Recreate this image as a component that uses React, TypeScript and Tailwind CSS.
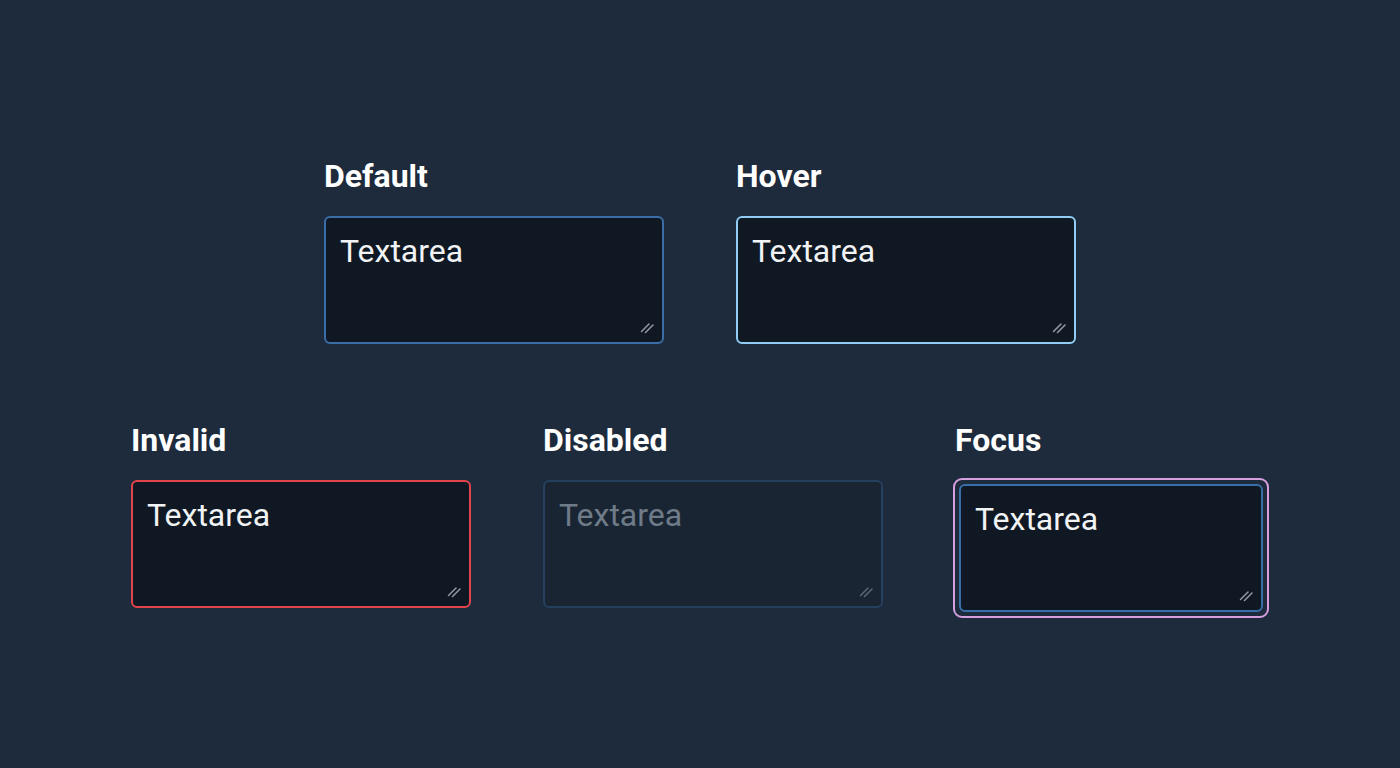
import React from "react";

const Grip = ({ dim = false }: { dim?: boolean }) => (
  <svg
    width="14"
    height="14"
    viewBox="0 0 14 14"
    className="absolute right-[8px] bottom-[8px]"
  >
    <line x1="1.5" y1="11.5" x2="9" y2="4" stroke={dim ? "#5d6875" : "#959ca4"} strokeWidth="1.5" strokeLinecap="round" />
    <line x1="5.5" y1="12.5" x2="13" y2="5" stroke={dim ? "#5d6875" : "#959ca4"} strokeWidth="1.5" strokeLinecap="round" />
  </svg>
);

const Label = ({ children }: { children: React.ReactNode }) => (
  <div className="text-[32px] leading-[36px] font-bold text-white">{children}</div>
);

const Box = ({
  className,
  textClass = "text-[#f1f3f5]",
  dim = false,
}: {
  className: string;
  textClass?: string;
  dim?: boolean;
}) => (
  <div className={`relative h-[128px] rounded-[6px] border-2 px-[14px] pt-[14px] ${className}`}>
    <div className={`text-[32px] leading-[38px] ${textClass}`}>Textarea</div>
    <Grip dim={dim} />
  </div>
);

export default function App() {
  return (
    <div
      className="w-full h-[768px] bg-[#1d2b3c] flex flex-col items-center pt-[158px]"
      style={{ fontFamily: "Roboto, 'Liberation Sans', sans-serif" }}
    >
      <div className="flex gap-[72px]">
        <div className="w-[340px] flex flex-col gap-[22px]">
          <Label>Default</Label>
          <Box className="border-[#3a6ea6] bg-[#101923]" />
        </div>
        <div className="w-[340px] flex flex-col gap-[22px]">
          <Label>Hover</Label>
          <Box className="border-[#90cdf4] bg-[#101923]" />
        </div>
      </div>
      <div className="flex gap-[72px] mt-[78px]">
        <div className="w-[340px] flex flex-col gap-[22px]">
          <Label>Invalid</Label>
          <Box className="border-[#e2444c] bg-[#101923]" />
        </div>
        <div className="w-[340px] flex flex-col gap-[22px]">
          <Label>Disabled</Label>
          <Box className="border-[#24405e] bg-[#1a2533]" textClass="text-[#6f7b88]" dim />
        </div>
        <div className="w-[316px] flex flex-col gap-[22px] ml-[-2px]">
          <div className="pl-[2px]">
            <Label>Focus</Label>
          </div>
          <div className="rounded-[9px] border-2 border-[#d59fe0] p-[4px] mt-[-2px]">
            <Box className="border-[#3a6ea6] bg-[#101923]" />
          </div>
        </div>
      </div>
    </div>
  );
}
